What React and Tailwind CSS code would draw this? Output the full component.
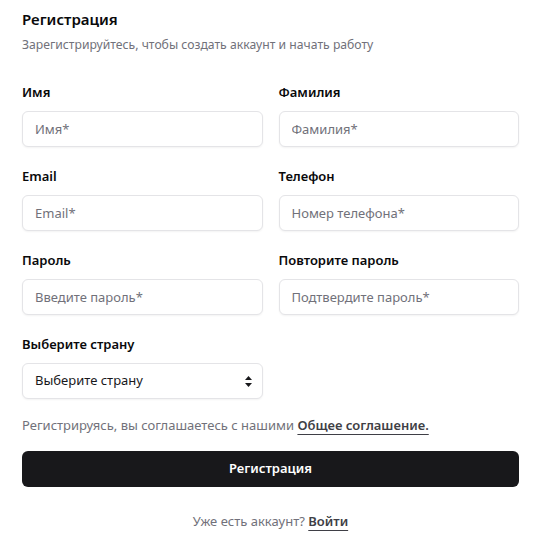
import React from 'react';

const font = { fontFamily: '"Noto Sans", "Open Sans", sans-serif' };

const inputCls =
  "w-full h-9 rounded-md border border-[#e4e4e7] bg-white px-3 text-[13px] text-[#18181b] placeholder:text-[#71717a] shadow-[0_1px_2px_rgba(0,0,0,0.05)] outline-none";

function Field({ label, placeholder, type }) {
  return (
    <div className="flex flex-col">
      <label className="text-[13px] font-semibold text-[#09090b] leading-5 mb-[9px]">{label}</label>
      <input type={type || "text"} placeholder={placeholder} className={inputCls} />
    </div>
  );
}

export default function App() {
  return (
    <div className="bg-white w-[541px] min-h-[535px] px-[22px] pt-[9px]" style={font}>
      <h1 className="text-[15px] font-semibold text-[#09090b] leading-5">Регистрация</h1>
      <p className="text-[12.2px] text-[#71717a] mt-[6px] leading-5">
        Зарегистрируйтесь, чтобы создать аккаунт и начать работу
      </p>

      <div className="grid grid-cols-2 gap-x-4 gap-y-[19px] mt-[27px]">
        <Field label="Имя" placeholder="Имя*" />
        <Field label="Фамилия" placeholder="Фамилия*" />
        <Field label="Email" placeholder="Email*" type="email" />
        <Field label="Телефон" placeholder="Номер телефона*" />
        <Field label="Пароль" placeholder="Введите пароль*" type="password" />
        <Field label="Повторите пароль" placeholder="Подтвердите пароль*" type="password" />
        <div className="flex flex-col">
          <label className="text-[13px] font-semibold text-[#09090b] leading-5 mb-[9px]">Выберите страну</label>
          <div className="relative">
            <div className={inputCls + " flex items-center text-[#18181b]"}>Выберите страну</div>
            <svg className="absolute right-[11px] top-[13px]" width="7" height="11" viewBox="0 0 7 11">
              <path d="M3.5 0 L7 4 H0 Z" fill="#18181b" />
              <path d="M3.5 11 L7 7 H0 Z" fill="#18181b" />
            </svg>
          </div>
        </div>
      </div>

      <p className="text-[13px] text-[#71717a] mt-[16px] leading-5">
        Регистрируясь, вы соглашаетесь с нашими{" "}
        <a className="font-semibold text-[#3f3f46] underline underline-offset-4 decoration-[#3f3f46]">Общее соглашение.</a>
      </p>

      <button className="mt-[16px] w-full h-9 rounded-md bg-[#18181b] text-white text-[13px] font-semibold">
        Регистрация
      </button>

      <p className="text-[13px] text-[#71717a] text-center mt-[24px] leading-5">
        Уже есть аккаунт?{" "}
        <a className="font-semibold text-[#3f3f46] underline underline-offset-4 decoration-[#3f3f46]">Войти</a>
      </p>
    </div>
  );
}
